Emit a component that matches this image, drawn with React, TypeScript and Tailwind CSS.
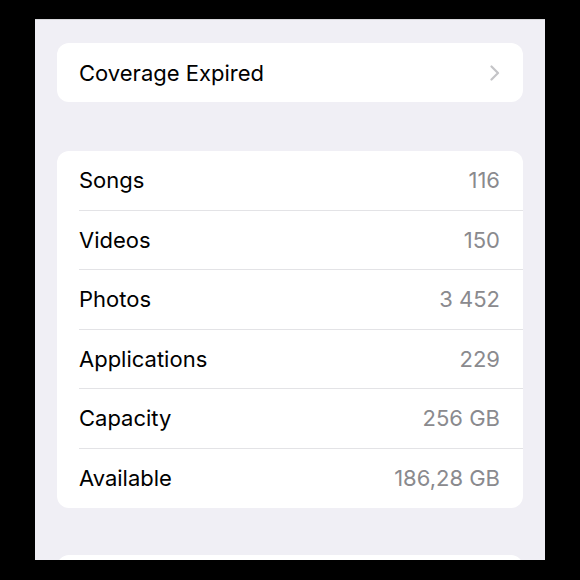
import React from 'react'

const rows = [
  { label: 'Songs', value: '116' },
  { label: 'Videos', value: '150' },
  { label: 'Photos', value: '3 452' },
  { label: 'Applications', value: '229' },
  { label: 'Capacity', value: '256 GB' },
  { label: 'Available', value: '186,28 GB' },
]

function Chevron() {
  return (
    <svg width="10" height="16" viewBox="0 0 10 16" fill="none">
      <path d="M1.5 1.5 L8 8 L1.5 14.5" stroke="#c4c4c7" strokeWidth="2.2" strokeLinecap="round" strokeLinejoin="round" />
    </svg>
  )
}

export default function App() {
  return (
    <div className="w-[580px] h-[580px] bg-black pt-[19px] pl-[35px] overflow-hidden" style={{ fontFamily: 'Inter, "Noto Sans", sans-serif' }}>
      <div className="w-[510px] h-[541px] bg-[#f0eff5] border-t border-[#d8d8dc] overflow-hidden px-[22px] pt-[23px]">
        {/* Coverage */}
        <div className="h-[59px] bg-white rounded-xl flex items-center justify-between pl-[22px] pr-[23px]">
          <span className="text-[22px] text-black pt-px">Coverage Expired</span>
          <Chevron />
        </div>

        {/* Stats */}
        <div className="mt-[49px] bg-white rounded-xl">
          {rows.map((r, i) => (
            <div key={r.label} className="h-[59.5px] pl-[22px] flex items-center">
              <div className={`flex-1 h-full flex items-center justify-between pr-[23px] pt-px ${i < rows.length - 1 ? 'border-b border-[#e3e3e6]' : ''}`}>
                <span className="text-[22px] text-black">{r.label}</span>
                <span className="text-[22px] text-[#8a8a8e]">{r.value}</span>
              </div>
            </div>
          ))}
        </div>

        <div className="mt-[47px] h-[40px] bg-white rounded-xl" />
      </div>
    </div>
  )
}
